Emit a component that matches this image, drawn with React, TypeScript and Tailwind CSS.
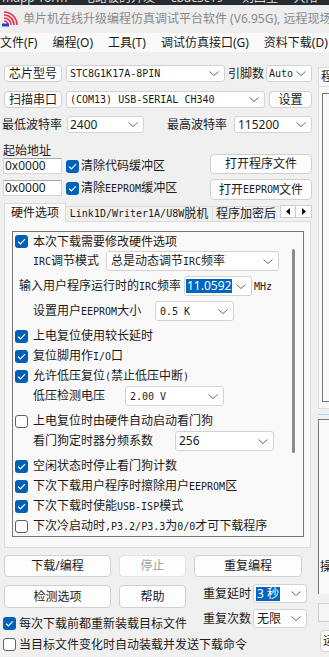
import React from "react";

// Latin text in the SimSun-style fields
const M = ({ children }: { children: React.ReactNode }) => (
  <span className="font-['DejaVu_Sans_Mono',monospace] text-[10px]">{children}</span>
);

const Chevron = () => (
  <svg width="10" height="5" viewBox="0 0 10 5" className="shrink-0">
    <path d="M0.5 0.5 L5 4.5 L9.5 0.5" fill="none" stroke="#666" strokeWidth="1" />
  </svg>
);

function Check({ checked = false, className = "" }: { checked?: boolean; className?: string }) {
  if (checked) {
    return (
      <span className={`w-[13px] h-[13px] rounded-[3px] bg-[#005fb8] flex items-center justify-center shrink-0 ${className}`}>
        <svg width="9" height="7" viewBox="0 0 9 7">
          <path d="M1 3.6 L3.4 5.8 L8 1.2" fill="none" stroke="white" strokeWidth="1.2" />
        </svg>
      </span>
    );
  }
  return <span className={`w-[13px] h-[13px] rounded-[3px] bg-white border border-[#5f5f5f] shrink-0 ${className}`} />;
}

function Combo({ className = "", children }: { className?: string; children?: React.ReactNode }) {
  return (
    <div className={`flex items-center bg-white border border-[#d3d3d3] rounded-[3px] pr-[5px] shrink-0 ${className}`}>
      <div className="flex-1 min-w-0 whitespace-nowrap overflow-hidden">{children}</div>
      <Chevron />
    </div>
  );
}

function Btn({ className = "", children }: { className?: string; children?: React.ReactNode }) {
  return (
    <div className={`flex items-center justify-center whitespace-nowrap bg-[#fdfdfd] border border-[#d0d0d0] rounded-[4px] shrink-0 ${className}`}>
      {children}
    </div>
  );
}

function CheckRow({ checked = false, className = "", children }: { checked?: boolean; className?: string; children: React.ReactNode }) {
  return (
    <div className={`flex items-center whitespace-nowrap ${className}`}>
      <Check checked={checked} />
      <span className="ml-[5px]">{children}</span>
    </div>
  );
}

const Logo = () => (
  <svg width="16" height="16" viewBox="0 0 16 16" className="shrink-0">
    <path d="M2 10 A4 4 0 0 1 6 14" fill="none" stroke="#e8334a" strokeWidth="1.6" />
    <path d="M2 7 A7 7 0 0 1 9 14" fill="none" stroke="#e8334a" strokeWidth="1.6" />
    <path d="M2 4 A10 10 0 0 1 12 14" fill="none" stroke="#e8334a" strokeWidth="1.6" />
    <path d="M2 1 A13 13 0 0 1 15 14" fill="none" stroke="#e8334a" strokeWidth="1.6" />
    <rect x="0" y="12.5" width="7" height="3" fill="#1d3fd6" />
  </svg>
);

export default function App() {
  return (
    <div className="w-[329px] h-[657px] overflow-hidden bg-[#f0f0f0] text-[12px] leading-[14px] text-[#1b1b1b] font-['Noto_Sans','Noto_Sans_CJK_SC',sans-serif]">
      {/* taskbar remnant */}
      <div className="h-[5px] overflow-hidden bg-[#262b30]">
        <div className="mt-[-9px] pl-[2px] whitespace-nowrap text-[#dcdcdc]">
          mapp Yorm&nbsp;&nbsp;&nbsp;&nbsp; 电路板的开发&nbsp;&nbsp;&nbsp;&nbsp; cbdc3c19&nbsp;&nbsp;&nbsp;&nbsp;&nbsp; 则四里&nbsp;&nbsp;&nbsp;&nbsp; 大阳
        </div>
      </div>

      {/* title bar */}
      <div className="h-[28px] bg-[#eeeeee] flex items-center pl-[2px] whitespace-nowrap overflow-hidden">
        <Logo />
        <span className="ml-[5px] text-[#8a8a8a]">单片机在线升级编程仿真调试平台软件 (V6.95G), 远程现场</span>
      </div>

      {/* menu bar */}
      <div className="h-[19px] bg-[#fafafa] flex items-center gap-[15px] whitespace-nowrap overflow-hidden">
        <span>文件(F)</span>
        <span>编程(O)</span>
        <span>工具(T)</span>
        <span>调试仿真接口(G)</span>
        <span>资料下载(D)</span>
      </div>

      <div className="flex">
        {/* left column */}
        <div className="w-[314px] shrink-0">
          <div className="mt-[13px] h-[17px] flex items-center pl-[4px]">
            <Btn className="w-[58px] h-[17px]">芯片型号</Btn>
            <Combo className="ml-[4px] w-[159px] h-[17px] pl-[3px]">
              <M>STC8G1K17A-8PIN</M>
            </Combo>
            <span className="ml-[3px] w-[38px] whitespace-nowrap">引脚数</span>
            <Combo className="w-[46px] h-[17px] pl-[2px]">
              <M>Auto</M>
            </Combo>
          </div>

          <div className="mt-[9px] h-[17px] flex items-center pl-[4px]">
            <Btn className="w-[58px] h-[17px]">扫描串口</Btn>
            <Combo className="ml-[4px] w-[199px] h-[17px] pl-[3px]">
              <M>(COM13) USB-SERIAL CH340</M>
            </Combo>
            <Btn className="ml-[4px] w-[43px] h-[17px]">设置</Btn>
          </div>

          <div className="mt-[8px] h-[17px] flex items-center pl-[2px]">
            <span className="w-[65px] whitespace-nowrap">最低波特率</span>
            <Combo className="w-[77px] h-[17px] pl-[2px]">2400</Combo>
            <span className="ml-[23px] w-[67px] whitespace-nowrap">最高波特率</span>
            <Combo className="w-[78px] h-[17px] pl-[3px]">115200</Combo>
          </div>

          <div className="mt-[11px] flex pl-[3px]">
            <div className="w-[207px]">
              <div className="h-[14px] pt-[1px] leading-[12px]">起始地址</div>
              <div className="h-[16px] flex items-center">
                <div className="w-[59px] h-[16px] bg-white border border-[#d6d6d6] border-t-[#a9a9a9] pl-[1px] flex items-center">0x0000</div>
                <Check checked className="ml-[4px]" />
                <span className="ml-[2px] whitespace-nowrap">清除代码缓冲区</span>
              </div>
              <div className="mt-[6px] h-[16px] flex items-center">
                <div className="w-[59px] h-[16px] bg-white border border-[#d6d6d6] border-t-[#a9a9a9] pl-[1px] flex items-center">0x0000</div>
                <Check checked className="ml-[4px]" />
                <span className="ml-[2px] whitespace-nowrap">
                  清除<M>EEPROM</M>缓冲区
                </span>
              </div>
            </div>
            <div className="w-[102px]">
              <Btn className="mt-[10px] h-[20px]">打开程序文件</Btn>
              <Btn className="mt-[5px] h-[21px]">
                打开<M>EEPROM</M>文件
              </Btn>
            </div>
          </div>

          {/* tabs */}
          <div className="mt-[3px] ml-[4px] h-[18px] flex items-end">
            <div className="relative z-10 -mb-px w-[62px] h-[19px] bg-[#f9f9f9] border border-b-0 border-[#dcdcdc] flex items-center justify-center">硬件选项</div>
            <div className="w-[147px] h-[15px] border-t border-r border-[#dcdcdc] flex items-center justify-center whitespace-nowrap">
              <M>Link1D/Writer1A/U8W</M>脱机
            </div>
            <div className="w-[67px] h-[15px] border-t border-[#dcdcdc] overflow-hidden whitespace-nowrap pl-[3px] flex items-center">程序加密后</div>
            <div className="self-start mt-[2px] flex">
              <div className="w-[16px] h-[13px] bg-[#fdfdfd] border border-[#cfcfcf] flex items-center justify-center">
                <svg width="4" height="7" viewBox="0 0 4 7"><path d="M4 0 L0 3.5 L4 7 Z" fill="#111" /></svg>
              </div>
              <div className="w-[16px] h-[13px] bg-[#fdfdfd] border border-l-0 border-[#cfcfcf] flex items-center justify-center">
                <svg width="4" height="7" viewBox="0 0 4 7"><path d="M0 0 L4 3.5 L0 7 Z" fill="#111" /></svg>
              </div>
            </div>
          </div>

          {/* tab panel */}
          <div className="ml-[4px] w-[307px] h-[327px] border border-[#dcdcdc] bg-[#f9f9f9] pt-[9px] pl-[7px]">
            <div className="w-[292px] h-[306px] border border-[#777] flex">
              <div className="flex-1 min-w-0">
                <CheckRow checked className="h-[19px] pl-[2px]">本次下载需要修改硬件选项</CheckRow>
                <div className="h-[20px] flex items-center pl-[20px] whitespace-nowrap">
                  <span className="w-[73px]">
                    <M>IRC</M>调节模式
                  </span>
                  <Combo className="w-[173px] h-[20px] pl-[4px]">
                    总是动态调节<M>IRC</M>频率
                  </Combo>
                </div>
                <div className="mt-[5px] h-[20px] flex items-center pl-[6px] whitespace-nowrap">
                  <span className="w-[165px]">
                    输入用户程序运行时的<M>IRC</M>频率
                  </span>
                  <Combo className="w-[68px] h-[20px] pl-[1px]">
                    <span className="bg-[#0067c0] text-white px-[1px]">11.0592</span>
                  </Combo>
                  <span className="ml-[2px]">
                    <M>MHz</M>
                  </span>
                </div>
                <div className="mt-[5px] h-[20px] flex items-center pl-[20px] whitespace-nowrap">
                  <span className="w-[122px]">
                    设置用户<M>EEPROM</M>大小
                  </span>
                  <Combo className="w-[79px] h-[20px] pl-[4px]">
                    <M>0.5 K</M>
                  </Combo>
                </div>
                <CheckRow checked className="mt-[5px] h-[20px] pl-[2px]">上电复位使用较长延时</CheckRow>
                <CheckRow checked className="h-[20px] pl-[2px]">
                  复位脚用作<M>I/O</M>口
                </CheckRow>
                <CheckRow checked className="h-[20px] pl-[2px]">
                  允许低压复位<M>(</M>禁止低压中断<M>)</M>
                </CheckRow>
                <div className="h-[20px] flex items-center pl-[20px] whitespace-nowrap">
                  <span className="w-[92px]">低压检测电压</span>
                  <Combo className="w-[99px] h-[20px] pl-[4px]">
                    <M>2.00 V</M>
                  </Combo>
                </div>
                <CheckRow className="mt-[5px] h-[20px] pl-[2px]">上电复位时由硬件自动启动看门狗</CheckRow>
                <div className="h-[20px] flex items-center pl-[20px] whitespace-nowrap">
                  <span className="w-[142px]">看门狗定时器分频系数</span>
                  <Combo className="w-[99px] h-[20px] pl-[3px]">256</Combo>
                </div>
                <CheckRow checked className="mt-[5px] h-[20px] pl-[2px]">空闲状态时停止看门狗计数</CheckRow>
                <CheckRow checked className="h-[20px] pl-[2px]">
                  下次下载用户程序时擦除用户<M>EEPROM</M>区
                </CheckRow>
                <CheckRow checked className="h-[20px] pl-[2px]">
                  下次下载时使能<M>USB-ISP</M>模式
                </CheckRow>
                <CheckRow className="h-[20px] pl-[2px]">
                  下次冷启动时<M>,P3.2/P3.3</M>为<M>0/0</M>才可下载程序
                </CheckRow>
              </div>
              <div className="w-[15px] shrink-0 pt-[17px] pl-[4px]">
                <div className="w-[3px] h-[204px] bg-[#8a8a8a] rounded-full" />
              </div>
            </div>
          </div>

          {/* bottom buttons */}
          <div className="mt-[7px] pl-[4px] flex">
            <Btn className="w-[107px] h-[22px]">下载/编程</Btn>
            <Btn className="ml-[8px] w-[67px] h-[22px] bg-[#f6f6f6] border-[#e3e3e3] text-[#a0a0a0]">停止</Btn>
            <Btn className="ml-[8px] w-[108px] h-[22px]">重复编程</Btn>
          </div>

          <div className="mt-[7px] flex">
            <div className="w-[190px] shrink-0 pl-[4px]">
              <div className="mt-[1px] flex">
                <Btn className="w-[107px] h-[23px] border-[#2c68b0]">检测选项</Btn>
                <Btn className="ml-[8px] w-[67px] h-[23px]">帮助</Btn>
              </div>
              <CheckRow checked className="mt-[9px] h-[13px] -ml-px">
                <span className="-ml-[2px]">每次下载前都重新装载目标文件</span>
              </CheckRow>
            </div>
            <div className="pl-[13px]">
              <div className="h-[19px] flex items-center whitespace-nowrap">
                <span className="w-[50px]">重复延时</span>
                <Combo className="w-[54px] h-[19px] pl-[2px]">
                  <span className="bg-[#0067c0] text-white px-[1px]">3 秒</span>
                </Combo>
              </div>
              <div className="mt-[6px] h-[19px] flex items-center whitespace-nowrap">
                <span className="w-[50px]">重复次数</span>
                <Combo className="w-[54px] h-[19px] pl-[3px]">无限</Combo>
              </div>
            </div>
          </div>

          <CheckRow className="mt-[8px] h-[13px] pl-[3px]">
            <span className="-ml-[2px]">当目标文件变化时自动装载并发送下载命令</span>
          </CheckRow>
        </div>

        {/* right column, clipped by the window edge */}
        <div className="flex-1 min-w-0 overflow-hidden">
          <div className="w-[60px]">
            <div className="mt-[15px] ml-[4px] h-[19px] border border-b-0 border-[#dcdcdc] bg-[#f9f9f9] pl-[2px] flex items-center whitespace-nowrap">程序</div>
            <div className="ml-[4px] h-[323px] border border-[#dcdcdc] bg-[#f9f9f9] pt-[6px] pl-[3px]">
              <div className="h-[309px] border border-[#777] bg-[#f9f9f9]" />
            </div>
            <div className="mt-[5px] ml-[4px] h-px bg-[#a9d3f2]" />
            <div className="mt-[4px] ml-[4px] h-[175px] border-l border-t border-[#777] bg-[#f9f9f9] flex items-end pb-[20px] pl-[1px]">操</div>
            <div className="mt-[9px] ml-[4px] h-[19px] border border-[#cfcfcf] bg-[#f6f6f6]" />
            <Btn className="mt-[8px] ml-[6px] h-[22px] justify-start pl-[2px]">运行</Btn>
          </div>
        </div>
      </div>
    </div>
  );
}
